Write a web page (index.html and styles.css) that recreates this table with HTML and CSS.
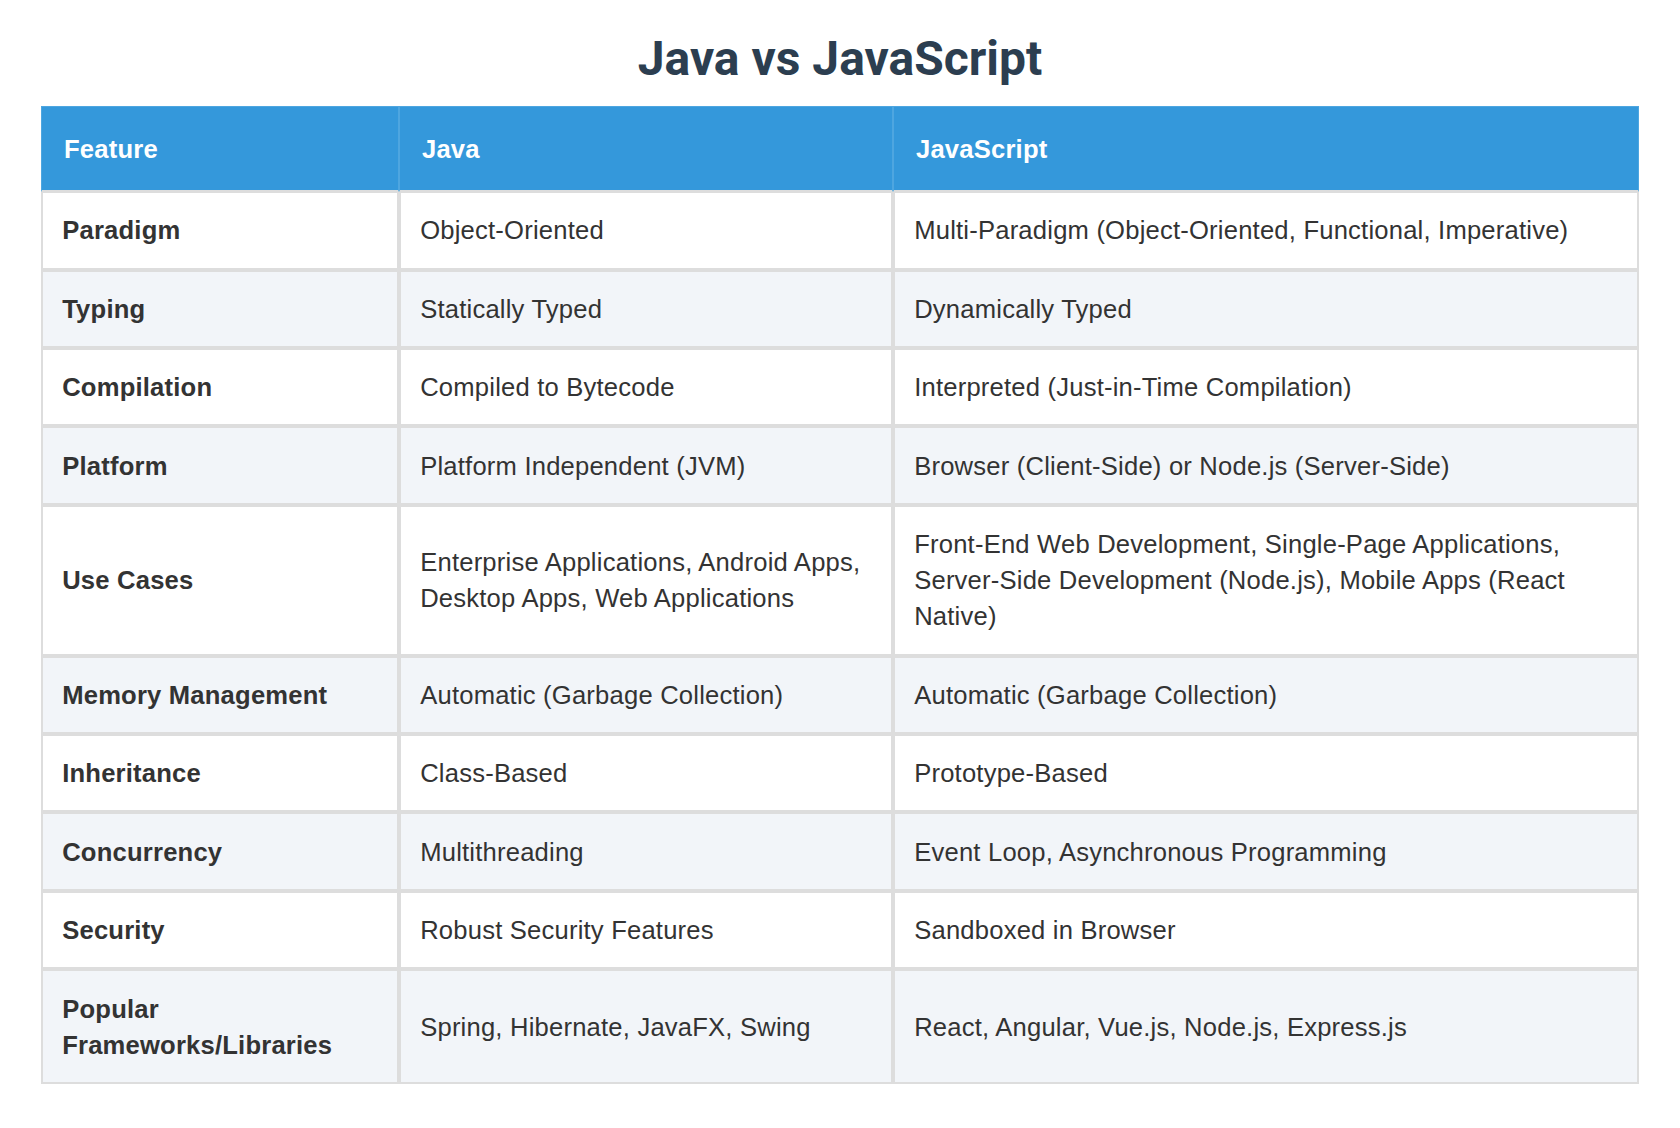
FILE: index.html
```html
<!DOCTYPE html>
<html lang="en">
<head>
<meta charset="utf-8">
<title>Java vs JavaScript</title>
<link rel="stylesheet" href="styles.css">
</head>
<body>
<main class="page">
  <h1 class="title">Java vs JavaScript</h1>
  <table class="compare">
    <thead>
      <tr>
        <th class="col-feature">Feature</th>
        <th class="col-java">Java</th>
        <th class="col-js">JavaScript</th>
      </tr>
    </thead>
    <tbody>
      <tr><td class="feat">Paradigm</td><td>Object-Oriented</td><td>Multi-Paradigm (Object-Oriented, Functional, Imperative)</td></tr>
      <tr><td class="feat">Typing</td><td>Statically Typed</td><td>Dynamically Typed</td></tr>
      <tr><td class="feat">Compilation</td><td>Compiled to Bytecode</td><td>Interpreted (Just-in-Time Compilation)</td></tr>
      <tr><td class="feat">Platform</td><td>Platform Independent (JVM)</td><td>Browser (Client-Side) or Node.js (Server-Side)</td></tr>
      <tr><td class="feat">Use Cases</td><td>Enterprise Applications, Android Apps, Desktop Apps, Web Applications</td><td>Front-End Web Development, Single-Page Applications, Server-Side Development (Node.js), Mobile Apps (React Native)</td></tr>
      <tr><td class="feat">Memory Management</td><td>Automatic (Garbage Collection)</td><td>Automatic (Garbage Collection)</td></tr>
      <tr><td class="feat">Inheritance</td><td>Class-Based</td><td>Prototype-Based</td></tr>
      <tr><td class="feat">Concurrency</td><td>Multithreading</td><td>Event Loop, Asynchronous Programming</td></tr>
      <tr><td class="feat">Security</td><td>Robust Security Features</td><td>Sandboxed in Browser</td></tr>
      <tr><td class="feat">Popular Frameworks/Libraries</td><td>Spring, Hibernate, JavaFX, Swing</td><td>React, Angular, Vue.js, Node.js, Express.js</td></tr>
    </tbody>
  </table>
</main>
</body>
</html>
```

FILE: styles.css
```css
html, body {
  margin: 0;
  padding: 0;
  background: #ffffff;
}

.page {
  padding: 0 41px;
  font-family: "Liberation Sans", Arial, sans-serif;
  color: #333333;
}

.title {
  margin: 31px 0 19px;
  font-family: Roboto, "Liberation Sans", sans-serif;
  font-weight: 700;
  font-size: 48px;
  line-height: 56px;
  text-align: center;
  color: #2c3e50;
}

.compare {
  width: 100%;
  table-layout: fixed;
  border-collapse: separate;
  border-spacing: 0;
  font-size: 25.6px;
  line-height: 1.41;
  letter-spacing: 0.2px;
}

.compare th,
.compare td {
  box-sizing: border-box;
  text-align: left;
  vertical-align: middle;
}

.compare th {
  background: #3498db;
  color: #ffffff;
  font-weight: 700;
  padding: 24px 22px 23px;
  border: 1px solid #4ea6e0;
  border-bottom: 2px solid #dddddd;
}

.col-feature { width: 358px; }
.col-java { width: 494px; }

.compare td {
  padding: 19.2px;
  border: 2px solid #dddddd;
  color: #333333;
}

.compare tbody tr:first-child td {
  border-top-width: 1px;
}

.compare td.feat {
  font-weight: 700;
}

.compare tbody tr:nth-child(even) td {
  background: #f2f5f9;
}
```
